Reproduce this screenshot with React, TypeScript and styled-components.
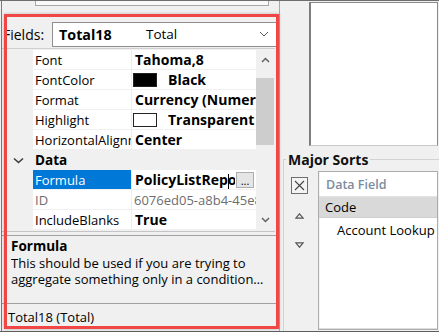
import styled, { createGlobalStyle } from 'styled-components';

const FONT = `"Open Sans", "Noto Sans", "DejaVu Sans", sans-serif`;

const GlobalStyle = createGlobalStyle`
  html, body {
    margin: 0;
    padding: 0;
    background: #f0f0f0;
  }
`;

type Property = {
  name: string;
  value?: string;
  swatch?: string;
  category?: boolean;
  selected?: boolean;
  disabled?: boolean;
  editor?: boolean;
};

const properties: Property[] = [
  { name: 'Font', value: 'Tahoma,8' },
  { name: 'FontColor', value: 'Black', swatch: '#000000' },
  { name: 'Format', value: 'Currency (Numeric)' },
  { name: 'Highlight', value: 'Transparent', swatch: '#ffffff' },
  { name: 'HorizontalAlignment', value: 'Center' },
  { name: 'Data', category: true },
  { name: 'Formula', value: 'PolicyListReport', selected: true, editor: true },
  { name: 'ID', value: '6076ed05-a8b4-45e8-9c1d', disabled: true },
  { name: 'IncludeBlanks', value: 'True' },
];

export default function App() {
  return (
    <>
      <GlobalStyle />
      <Page>
        <LeftPane>
          <TopStub>
            <StubBox />
          </TopStub>
          <FieldsRow>
            <FieldsLabel>Fields:</FieldsLabel>
            <Combo>
              <ComboName>Total18</ComboName>
              <ComboType>Total</ComboType>
              <ComboArrow width="10" height="6" viewBox="0 0 10 6">
                <polyline points="1,1 5,5 9,1" fill="none" stroke="#5a5a5a" strokeWidth="1" />
              </ComboArrow>
            </Combo>
          </FieldsRow>
          <PropGrid>
            <PropRows>
              {properties.map((p) =>
                p.category ? (
                  <CategoryRow key={p.name}>
                    <Gutter>
                      <svg width="11" height="7" viewBox="0 0 11 7">
                        <polyline points="1,1.5 5.5,5.5 10,1.5" fill="none" stroke="#3c3c3c" strokeWidth="1.6" />
                      </svg>
                    </Gutter>
                    <CategoryName>{p.name}</CategoryName>
                  </CategoryRow>
                ) : (
                  <PropRow key={p.name}>
                    <Gutter />
                    <NameCell $selected={p.selected} $disabled={p.disabled}>
                      {p.name}
                    </NameCell>
                    <ValueCell $disabled={p.disabled}>
                      {p.swatch && <Swatch $color={p.swatch} />}
                      {p.editor ? (
                        <>
                          <EditorText>
                            PolicyListRep
                            <Caret />
                            ort
                          </EditorText>
                          <EllipsisButton>...</EllipsisButton>
                        </>
                      ) : (
                        p.value
                      )}
                    </ValueCell>
                  </PropRow>
                )
              )}
            </PropRows>
            <ScrollBar>
              <ScrollArrow>
                <svg width="9" height="6" viewBox="0 0 9 6">
                  <polyline points="1,5 4.5,1.5 8,5" fill="none" stroke="#606060" strokeWidth="1.5" />
                </svg>
              </ScrollArrow>
              <ScrollTrack>
                <ScrollThumb />
              </ScrollTrack>
              <ScrollArrow>
                <svg width="9" height="6" viewBox="0 0 9 6">
                  <polyline points="1,1 4.5,4.5 8,1" fill="none" stroke="#606060" strokeWidth="1.5" />
                </svg>
              </ScrollArrow>
            </ScrollBar>
          </PropGrid>
          <Description>
            <DescTitle>Formula</DescTitle>
            <DescLine>This should be used if you are trying to</DescLine>
            <DescLine>aggregate something only in a condition…</DescLine>
          </Description>
          <Status>Total18 (Total)</Status>
        </LeftPane>
        <RightPane>
          <TopArea>
            <PreviewBox />
          </TopArea>
          <SortGroup>
            <SortLegend>Major Sorts</SortLegend>
            <SortBody>
              <SortTools>
                <ClearButton>
                  <svg width="11" height="11" viewBox="0 0 11 11">
                    <path d="M1 1 L10 10 M10 1 L1 10" stroke="#444" strokeWidth="1.1" />
                  </svg>
                </ClearButton>
                <MoveButton>
                  <svg width="9" height="6" viewBox="0 0 9 6">
                    <polygon points="4.5,0.8 8.2,5.2 0.8,5.2" fill="none" stroke="#555" strokeWidth="1.2" />
                  </svg>
                </MoveButton>
                <MoveButton>
                  <svg width="9" height="6" viewBox="0 0 9 6">
                    <polygon points="0.8,0.8 8.2,0.8 4.5,5.2" fill="none" stroke="#555" strokeWidth="1.2" />
                  </svg>
                </MoveButton>
              </SortTools>
              <SortList>
                <ListHeader>Data Field</ListHeader>
                <ListItem $selected>Code</ListItem>
                <ListItem $indent>Account Lookup (Code)</ListItem>
              </SortList>
            </SortBody>
          </SortGroup>
        </RightPane>
        <Highlight />
      </Page>
    </>
  );
}

const Page = styled.div`
  position: relative;
  display: flex;
  width: 439px;
  height: 332px;
  box-sizing: border-box;
  border-top: 1px solid #6e6e6e;
  border-bottom: 1px solid #5e5e5e;
  margin-bottom: 1px;
  background: #f0f0f0;
  font-family: ${FONT};
  color: #000;
  overflow: hidden;
`;

const LeftPane = styled.div`
  display: flex;
  flex-direction: column;
  width: 279px;
  flex: none;
  margin-left: 1px;
  box-sizing: border-box;
  border-left: 1px solid #7a7a7a;
  border-right: 1px solid #a8a8a8;
`;

const TopStub = styled.div`
  height: 12px;
  padding-left: 33px;
`;

const StubBox = styled.div`
  width: 232px;
  height: 4px;
  background: #fafafa;
  border: 1px solid #a8a8a8;
  border-top: none;
`;

const FieldsRow = styled.div`
  display: flex;
  align-items: center;
  height: 35px;
  padding-top: 7px;
  box-sizing: border-box;
`;

const FieldsLabel = styled.span`
  width: 49px;
  padding-left: 1px;
  font-size: 14px;
  white-space: nowrap;
`;

const Combo = styled.div`
  display: flex;
  align-items: center;
  width: 225px;
  height: 25px;
  box-sizing: border-box;
  border: 1px solid #8f8f8f;
  background: #fff;
  font-size: 13.5px;
`;

const ComboName = styled.span`
  width: 87px;
  padding-left: 6px;
  font-weight: 700;
  font-size: 14.3px;
`;

const ComboType = styled.span`
  flex: 1;
  color: #000;
`;

const ComboArrow = styled.svg`
  margin-right: 7px;
`;

const PropGrid = styled.div`
  display: flex;
  height: 182px;
  margin-right: 4px;
  border-top: 1px solid #d0d0d0;
  border-bottom: 1px solid #c4c4c4;
`;

const PropRows = styled.div`
  flex: 1;
  overflow: hidden;
  font-size: 13px;
  padding-top: 1px;
`;

const PropRow = styled.div`
  display: grid;
  grid-template-columns: 31px 99px 1fr;
  height: 20px;
`;

const CategoryRow = styled(PropRow)`
  background: #f0f0f0;
`;

const Gutter = styled.div`
  display: flex;
  align-items: center;
  justify-content: center;
  padding-left: 1px;
  background: #f0f0f0;
`;

const NameCell = styled.div<{ $selected?: boolean; $disabled?: boolean }>`
  display: flex;
  align-items: center;
  padding-left: 2px;
  box-sizing: border-box;
  white-space: nowrap;
  overflow: hidden;
  border-right: 1px solid #ececec;
  border-bottom: 1px solid #f0f0f0;
  background: ${({ $selected }) => ($selected ? '#0078d7' : '#fff')};
  color: ${({ $selected, $disabled }) => ($selected ? '#fff' : $disabled ? '#6d6d6d' : '#000')};
`;

const CategoryName = styled.div`
  display: flex;
  align-items: center;
  padding-left: 2px;
  font-weight: 700;
  font-size: 13.5px;
`;

const ValueCell = styled.div<{ $disabled?: boolean }>`
  display: flex;
  align-items: center;
  padding-left: ${({ $disabled }) => ($disabled ? '2px' : '3px')};
  box-sizing: border-box;
  white-space: nowrap;
  overflow: hidden;
  border-bottom: 1px solid #f0f0f0;
  background: #fff;
  font-size: ${({ $disabled }) => ($disabled ? '13px' : '14px')};
  font-weight: ${({ $disabled }) => ($disabled ? 400 : 700)};
  color: ${({ $disabled }) => ($disabled ? '#6d6d6d' : '#000')};
`;

const Swatch = styled.span<{ $color: string }>`
  flex: none;
  width: 24px;
  height: 14px;
  box-sizing: border-box;
  margin: 0 11px 0 -2px;
  border: 1px solid #222;
  background: ${({ $color }) => $color};
`;

const EditorText = styled.span`
  flex: 1;
  overflow: hidden;
  white-space: nowrap;
`;

const Caret = styled.span`
  display: inline-block;
  width: 1px;
  height: 15px;
  margin: 0 -1px 0 0;
  vertical-align: middle;
  background: #000;
`;

const EllipsisButton = styled.span`
  flex: none;
  display: flex;
  align-items: flex-end;
  justify-content: center;
  width: 18px;
  height: 16px;
  margin: 0 2px 0 1px;
  box-sizing: border-box;
  border: 1px solid #adadad;
  background: #e5e5e5;
  font-weight: 400;
  font-size: 11px;
  line-height: 12px;
`;

const ScrollBar = styled.div`
  display: flex;
  flex-direction: column;
  width: 19px;
  background: #f0f0f0;
`;

const ScrollArrow = styled.div`
  display: flex;
  align-items: center;
  justify-content: center;
  height: 22px;
`;

const ScrollTrack = styled.div`
  flex: 1;
  padding-top: 7px;
`;

const ScrollThumb = styled.div`
  width: 18px;
  height: 67px;
  background: #cdcdcd;
`;

const Description = styled.div`
  height: 68px;
  margin-top: 3px;
  padding: 2px 0 0 9px;
  box-sizing: border-box;
  border-top: 1px solid #a0a0a0;
  font-size: 13px;
  line-height: 16px;
`;

const DescTitle = styled.div`
  font-weight: 700;
  font-size: 13.5px;
  line-height: 17px;
`;

const DescLine = styled.div`
  white-space: nowrap;
`;

const Status = styled.div`
  display: flex;
  align-items: center;
  height: 25px;
  padding-left: 6px;
  border-top: 1px solid #a0a0a0;
  font-size: 13px;
`;

const RightPane = styled.div`
  display: flex;
  flex-direction: column;
  flex: 1;
  min-width: 0;
`;

const TopArea = styled.div`
  height: 145px;
  padding: 1px 1px 0 29px;
  box-sizing: border-box;
`;

const PreviewBox = styled.div`
  height: 100%;
  box-sizing: border-box;
  background: #fff;
  border: 1px solid #8a8a8a;
  border-left: 2px solid #7e7e7e;
  border-bottom-color: #c8c8c8;
`;

const SortGroup = styled.fieldset`
  flex: 1;
  display: flex;
  flex-direction: column;
  min-width: 0;
  margin: 5px 0 0 3px;
  padding: 0;
  border: 1px solid #d2d2d2;
  border-right: none;
  border-bottom: none;
`;

const SortLegend = styled.legend`
  margin-left: 2px;
  padding: 0 2px;
  font-weight: 700;
  font-size: 14px;
  line-height: 17px;
  color: #111;
  white-space: nowrap;
`;

const SortBody = styled.div`
  flex: 1;
  display: flex;
`;

const SortTools = styled.div`
  display: flex;
  flex-direction: column;
  align-items: center;
  width: 34px;
  padding: 9px 4px 0 0;
  box-sizing: border-box;
`;

const ClearButton = styled.div`
  display: flex;
  align-items: center;
  justify-content: center;
  width: 17px;
  height: 17px;
  box-sizing: border-box;
  border: 1px solid #6e6e6e;
  background: #f4f4f4;
`;

const MoveButton = styled.div`
  display: flex;
  align-items: center;
  justify-content: center;
  width: 16px;
  height: 14px;
  margin-top: 15px;
`;

const SortList = styled.div`
  flex: 1;
  min-width: 0;
  margin: 3px 1px 1px 0;
  box-sizing: border-box;
  border: 1px solid #adadad;
  box-shadow: inset 0 -1px 0 #dcdcdc, inset 1px 0 0 #f4f4f4;
  background: #fff;
  font-size: 13px;
  overflow: hidden;
`;

const ListHeader = styled.div`
  display: flex;
  align-items: center;
  height: 24px;
  padding-left: 7px;
  border-bottom: 1px solid #e3e3e3;
  font-weight: 600;
  font-size: 12.5px;
  color: #7b8ca1;
  white-space: nowrap;
`;

const ListItem = styled.div<{ $selected?: boolean; $indent?: boolean }>`
  display: flex;
  align-items: center;
  height: ${({ $selected }) => ($selected ? '20px' : '23px')};
  padding-left: ${({ $indent }) => ($indent ? '18px' : '6px')};
  white-space: nowrap;
  background: ${({ $selected }) => ($selected ? '#d9d9d9' : 'transparent')};
  border-bottom: ${({ $selected }) => ($selected ? '1px solid #cfcfcf' : 'none')};
`;

const Highlight = styled.div`
  position: absolute;
  left: 4px;
  top: 13px;
  width: 275px;
  height: 315px;
  box-sizing: border-box;
  border: 3px solid #f04646;
  box-shadow: 0 0 3px rgba(0, 0, 0, 0.25);
  pointer-events: none;
`;
